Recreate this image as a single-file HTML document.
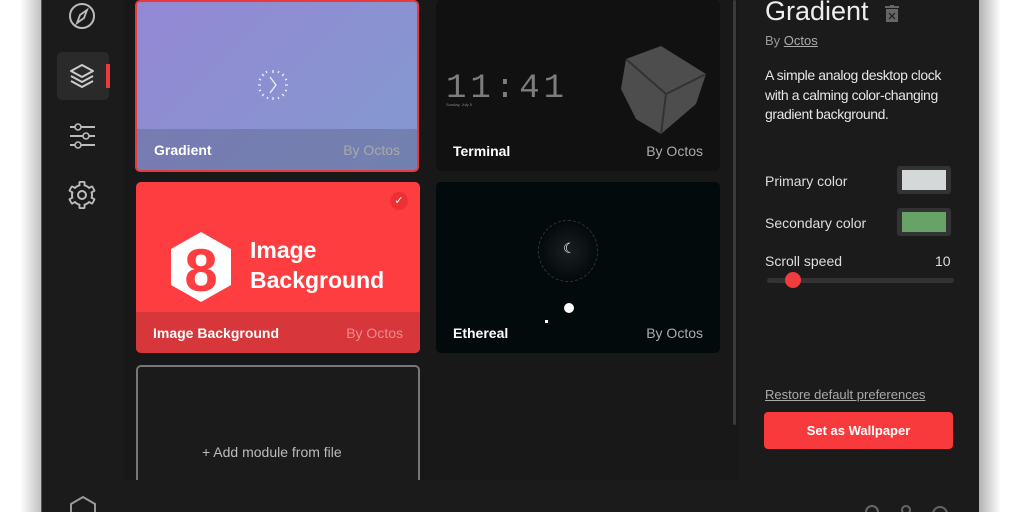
<!DOCTYPE html>
<html><head><meta charset="utf-8"><style>
*{margin:0;padding:0;box-sizing:border-box}
body{width:1024px;height:512px;overflow:hidden;background:#fff;font-family:"Liberation Sans",sans-serif;position:relative}
.shadowL{position:absolute;left:20px;top:0;width:22px;height:512px;background:linear-gradient(90deg,rgba(0,0,0,0),rgba(0,0,0,.25))}
.shadowR{position:absolute;left:979px;top:0;width:22px;height:512px;background:linear-gradient(90deg,rgba(0,0,0,.3),rgba(0,0,0,0))}
.win{position:absolute;left:41px;top:0;width:938px;height:512px;background:#1b1b1b;border-left:1px solid #555}
.content{position:absolute;left:82px;top:0;width:614px;height:480px;background:#181818}
.scroll{position:absolute;left:733px;top:0;width:3px;height:425px;background:#3a3a3a;border-radius:2px}
.card{position:absolute;width:284px;height:171px;border-radius:5px;overflow:hidden}
.card .bar{position:absolute;left:0;bottom:0;width:100%;height:41px;padding:0 17px;display:flex;justify-content:space-between;align-items:center;font-size:14px}
.card .bar b{color:#fff}
.card .bar span{color:#aaa}
.t{position:absolute;color:#ddd;font-size:14px}
</style></head><body>
<div class="shadowL"></div><div class="shadowR"></div>
<div class="win">
 <div class="content"></div>
</div>
<svg style="position:absolute;left:0;top:0" width="130" height="512">
 <circle cx="82" cy="16" r="12" fill="none" stroke="#bbb" stroke-width="2"/>
 <path d="M87 10 L84 18 L77 23 L80 15 Z" fill="none" stroke="#bbb" stroke-width="1.8"/>
 <rect x="57" y="52" width="52" height="48" rx="5" fill="#2a2a2a"/>
 <rect x="106" y="64" width="4" height="24" fill="#e83b3b"/>
 <path d="M82 65 L93 71 L82 77 L71 71 Z" fill="none" stroke="#ccc" stroke-width="2" stroke-linejoin="round"/>
 <path d="M71 76 L82 82 L93 76 M71 81 L82 87 L93 81" fill="none" stroke="#ccc" stroke-width="2" stroke-linejoin="round"/>
 <path d="M70 127 H95 M70 136 H95 M70 145 H95" stroke="#bbb" stroke-width="2"/>
 <circle cx="78" cy="127" r="3" fill="#1b1b1b" stroke="#bbb" stroke-width="1.6"/>
 <circle cx="86" cy="136" r="3" fill="#1b1b1b" stroke="#bbb" stroke-width="1.6"/>
 <circle cx="78" cy="145" r="3" fill="#1b1b1b" stroke="#bbb" stroke-width="1.6"/>
 <g transform="translate(82 195)">
  <circle r="11" fill="#bbb"/>
  <g fill="#bbb">
   <rect x="-3.5" y="-14" width="7" height="6" rx="1.5"/>
   <rect x="-3.5" y="-14" width="7" height="6" rx="1.5" transform="rotate(60)"/>
   <rect x="-3.5" y="-14" width="7" height="6" rx="1.5" transform="rotate(120)"/>
   <rect x="-3.5" y="-14" width="7" height="6" rx="1.5" transform="rotate(180)"/>
   <rect x="-3.5" y="-14" width="7" height="6" rx="1.5" transform="rotate(240)"/>
   <rect x="-3.5" y="-14" width="7" height="6" rx="1.5" transform="rotate(300)"/>
  </g>
  <g fill="#1b1b1b">
   <circle r="9"/>
   <rect x="-1.6" y="-12.2" width="3.2" height="5"/>
   <rect x="-1.6" y="-12.2" width="3.2" height="5" transform="rotate(60)"/>
   <rect x="-1.6" y="-12.2" width="3.2" height="5" transform="rotate(120)"/>
   <rect x="-1.6" y="-12.2" width="3.2" height="5" transform="rotate(180)"/>
   <rect x="-1.6" y="-12.2" width="3.2" height="5" transform="rotate(240)"/>
   <rect x="-1.6" y="-12.2" width="3.2" height="5" transform="rotate(300)"/>
  </g>
  <circle r="4" fill="none" stroke="#bbb" stroke-width="2"/>
 </g>
 <path d="M71 514 V504 L83 497 L95 504 V514" fill="none" stroke="#999" stroke-width="2"/>
</svg>
<div class="card" style="left:135px;top:0;height:172px;background:linear-gradient(135deg,#9488d4,#8399cf);border:2px solid #e8393b">
 <svg style="position:absolute;left:118px;top:65px" width="36" height="36" viewBox="0 0 36 36"><g stroke="#fff" stroke-width="1.3" opacity=".85">
 <path d="M18 3v3M18 30v3M3 18h3M30 18h3M7 7l2 2M27 27l2 2M7 29l2-2M27 9l2-2M11 4l1 2M24 4l-1 2M4 12l2 1M32 12l-2 1M4 24l2-1M32 24l-2-1M12 32l1-2M24 32l-1-2"/>
 <path d="M15 10 L21 18 L15 26" fill="none"/></g></svg>
 <div class="bar" style="background:rgba(100,110,150,.55)"><b>Gradient</b><span>By Octos</span></div>
</div>
<div class="card" style="left:436px;top:0;background:#111">
 <div style="position:absolute;left:10px;top:70px;font-family:'Liberation Mono',monospace;font-size:34px;color:#999;letter-spacing:4px;opacity:.8">11:41</div>
 <div style="position:absolute;left:10px;top:102px;font-size:4px;color:#888">Sunday, July 5</div>
 <svg style="position:absolute;left:180px;top:44px" width="90" height="92"><path d="M10 15 L45 2 L90 30 L80 60 L45 90 L20 75 L5 45 Z" fill="#666" opacity=".7"/><path d="M10 15 L50 50 L90 30 M50 50 L45 90" stroke="#333" stroke-width="2" fill="none"/></svg>
 <div class="bar"><b>Terminal</b><span>By Octos</span></div>
</div>
<div class="card" style="left:136px;top:182px;background:#fe3d40">
 <div style="position:absolute;right:12px;top:10px;width:18px;height:18px;border-radius:50%;background:#ee3035;color:#fff;font-size:11px;text-align:center;line-height:18px">✓</div>
 <svg style="position:absolute;left:33px;top:48px" width="64" height="74"><path d="M32 2 L62 19 L62 55 L32 72 L2 55 L2 19 Z" fill="#fff"/><text x="32" y="61" text-anchor="middle" font-family="Liberation Sans" font-weight="bold" font-size="60" fill="#fe3d40">8</text></svg>
 <div style="position:absolute;left:114px;top:53px;color:#fff;font-weight:bold;font-size:23px;line-height:30px">Image<br>Background</div>
 <div class="bar" style="background:#d7363a"><b>Image Background</b><span style="color:#f08a8a">By Octos</span></div>
</div>
<div class="card" style="left:436px;top:182px;background:#030a0c">
 <div style="position:absolute;left:102px;top:38px;width:60px;height:62px;border-radius:50%;border:1px dashed #333;background:radial-gradient(#1a2022,#040a0c 70%)"></div>
 <div style="position:absolute;left:127px;top:58px;color:#fff;font-size:14px">☾</div>
 <div style="position:absolute;left:128px;top:121px;width:10px;height:10px;border-radius:50%;background:#fff"></div>
 <div style="position:absolute;left:109px;top:138px;width:3px;height:3px;background:#fff"></div>
 <div class="bar"><b>Ethereal</b><span>By Octos</span></div>
</div>
<div style="position:absolute;left:136px;top:365px;width:284px;height:115px;border:2px solid #777;border-bottom:none;border-radius:5px 5px 0 0;background:#1b1b1b"></div>
<div class="t" style="left:202px;top:444px;color:#bbb">+ Add module from file</div>
<div class="scroll"></div>
<div class="t" style="left:765px;top:-4px;font-size:27px;color:#eee;font-weight:normal;letter-spacing:0">Gradient</div>
<svg style="position:absolute;left:885px;top:5px" width="14" height="17"><rect x="0" y="1" width="14" height="2" fill="#666"/><rect x="5" y="0" width="4" height="2" fill="#666"/><rect x="1" y="4" width="12" height="13" fill="#666"/><path d="M4 8l6 6M10 8l-6 6" stroke="#1b1b1b" stroke-width="1.2"/></svg>
<div class="t" style="left:765px;top:33px;font-size:13px;color:#999">By <u style="color:#aaa">Octos</u></div>
<div class="t" style="left:765px;top:66px;font-size:14px;line-height:19.5px;width:178px;color:#e6e6e6;letter-spacing:-0.4px">A simple analog desktop clock with a calming color-changing gradient background.</div>
<div class="t" style="left:765px;top:173px">Primary color</div>
<div style="position:absolute;left:897px;top:166px;width:54px;height:28px;background:#333;border-radius:3px;padding:4px 5px"><div style="width:100%;height:100%;background:#d4d8d8"></div></div>
<div class="t" style="left:765px;top:215px">Secondary color</div>
<div style="position:absolute;left:897px;top:208px;width:54px;height:28px;background:#333;border-radius:3px;padding:4px 5px"><div style="width:100%;height:100%;background:#67a266"></div></div>
<div class="t" style="left:765px;top:253px">Scroll speed</div>
<div class="t" style="left:935px;top:253px">10</div>
<div style="position:absolute;left:767px;top:278px;width:187px;height:5px;border-radius:3px;background:#333"></div>
<div style="position:absolute;left:785px;top:272px;width:16px;height:16px;border-radius:50%;background:#f03c3e"></div>
<div class="t" style="left:765px;top:387px;font-size:13px;color:#aaa;text-decoration:underline">Restore default preferences</div>
<div style="position:absolute;left:764px;top:412px;width:189px;height:37px;border-radius:4px;background:#f83a3d;color:#fff;font-size:13px;font-weight:bold;text-align:center;line-height:37px">Set as Wallpaper</div>
<svg style="position:absolute;left:860px;top:500px" width="100" height="12"><circle cx="12" cy="12" r="6" fill="none" stroke="#666" stroke-width="2"/><circle cx="46" cy="10" r="4" fill="none" stroke="#666" stroke-width="2"/><circle cx="80" cy="14" r="7" fill="none" stroke="#666" stroke-width="2"/></svg>
</body></html>
